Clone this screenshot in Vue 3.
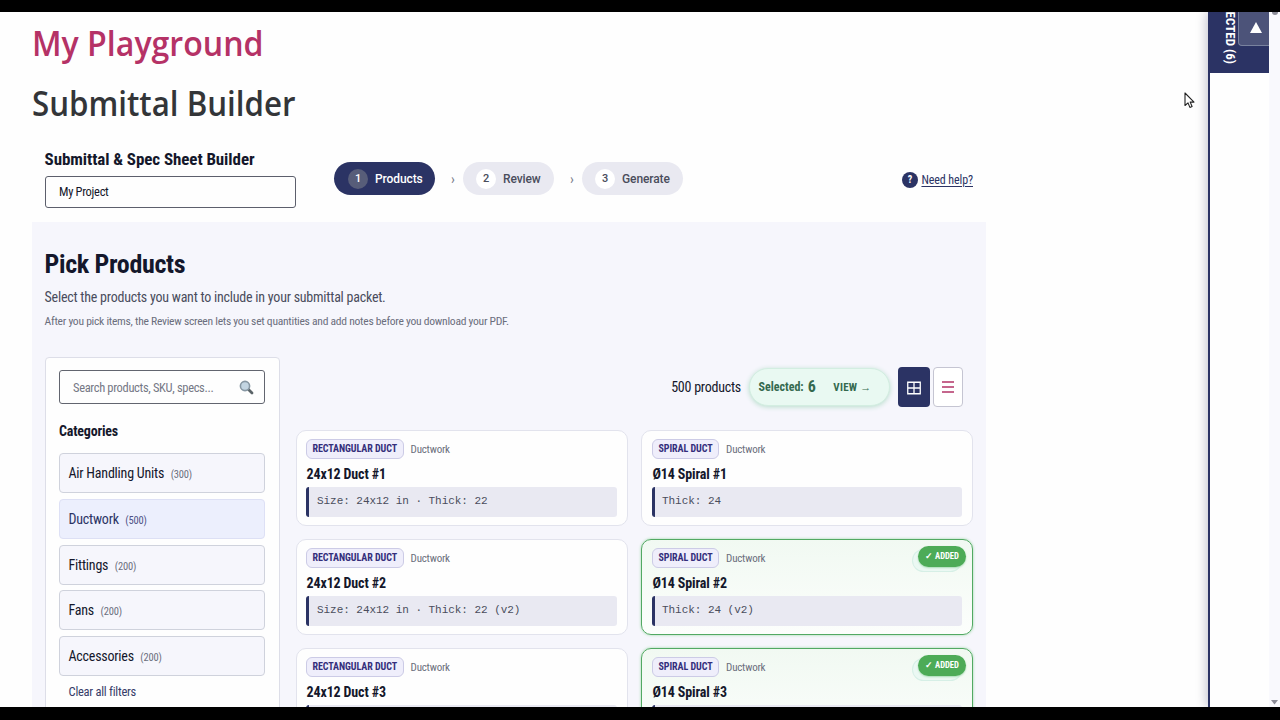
<script setup>
const steps = ['Products', 'Review', 'Generate']
const categories = [
  { name: 'Air Handling Units', count: 300 },
  { name: 'Ductwork', count: 500, active: true },
  { name: 'Fittings', count: 200 },
  { name: 'Fans', count: 200 },
  { name: 'Accessories', count: 200 },
]
const products = [
  { type: 'RECTANGULAR DUCT', name: '24x12 Duct #1', spec: 'Size: 24x12 in · Thick: 22' },
  { type: 'SPIRAL DUCT', name: 'Ø14 Spiral #1', spec: 'Thick: 24' },
  { type: 'RECTANGULAR DUCT', name: '24x12 Duct #2', spec: 'Size: 24x12 in · Thick: 22 (v2)' },
  { type: 'SPIRAL DUCT', name: 'Ø14 Spiral #2', spec: 'Thick: 24 (v2)', added: true },
  { type: 'RECTANGULAR DUCT', name: '24x12 Duct #3', spec: '' },
  { type: 'SPIRAL DUCT', name: 'Ø14 Spiral #3', spec: '', added: true },
]
</script>

<template>
  <div class="screen">
    <div class="viewport">
      <main class="page">
        <h1 class="site">My Playground</h1>
        <h2 class="sub">Submittal Builder</h2>
        <header class="head">
          <div class="project">
            <div class="project-label">Submittal &amp; Spec Sheet Builder</div>
            <div class="project-input">My Project</div>
          </div>
          <nav class="steps">
            <template v-for="(s, i) in steps" :key="s">
              <span v-if="i" class="chev">›</span>
              <div class="step" :class="['s' + i, { on: i === 0 }]">
                <span class="num">{{ i + 1 }}</span><span class="step-name">{{ s }}</span>
              </div>
            </template>
          </nav>
          <div class="help"><span class="q">?</span><span class="help-text">Need help?</span></div>
        </header>

        <section class="panel">
          <h3 class="pick">Pick Products</h3>
          <p class="lead">Select the products you want to include in your submittal packet.</p>
          <p class="hint">After you pick items, the Review screen lets you set quantities and add notes before you download your PDF.</p>
          <div class="cols">
            <aside class="side">
              <div class="search">
                <span class="ph">Search products, SKU, specs...</span>
                <svg width="15" height="15" viewBox="0 0 15 15">
                  <path d="M9 9 L13 13" stroke="#5b6468" stroke-width="2.8" stroke-linecap="round" />
                  <circle cx="6" cy="6" r="4.6" fill="#c3d5e2" stroke="#8797a3" stroke-width="1.6" />
                </svg>
              </div>
              <div class="cat-title">Categories</div>
              <div class="cats">
                <div v-for="c in categories" :key="c.name" class="cat" :class="{ active: c.active }">
                  <span>{{ c.name }}</span><span class="count">({{ c.count }})</span>
                </div>
              </div>
              <div class="clear">Clear all filters</div>
            </aside>
            <div class="main">
              <div class="tools">
                <span class="total">500 products</span>
                <div class="pill">
                  <span class="sel">Selected:</span><span class="six">6</span><span class="view">VIEW →</span>
                </div>
                <div class="tb grid-on">
                  <svg width="14" height="14" viewBox="0 0 14 14"><path d="M.75 1.25h12.5v11.5H.75zM7 1.25v11.5M.75 7h12.5" fill="none" stroke="#fff" stroke-width="1.3" /></svg>
                </div>
                <div class="tb list">
                  <svg width="12" height="12" viewBox="0 0 12 12"><path d="M0 1h12M0 6h12M0 11h12" stroke="#b23468" stroke-width="1.6" /></svg>
                </div>
              </div>
              <div class="cards">
                <article v-for="p in products" :key="p.name" class="card" :class="{ added: p.added }">
                  <div class="meta"><span class="badge">{{ p.type }}</span><span class="kind">Ductwork</span></div>
                  <div class="name">{{ p.name }}</div>
                  <div class="spec">{{ p.spec }}</div>
                  <div v-if="p.added" class="tag">✓ ADDED</div>
                </article>
              </div>
            </div>
          </div>
        </section>
      </main>
      <aside class="drawer">
        <div class="drawer-head">
          <span class="vert">SELECTED (6)</span>
          <div class="toggle"><svg width="12" height="11" viewBox="0 0 12 11"><path d="M6 0 12 11H0z" fill="#fff" /></svg></div>
        </div>
      </aside>
      <div class="scroll">
        <i class="up"></i>
        <svg width="7" height="5" viewBox="0 0 7 5"><path d="M0 0h7L3.5 4.5z" fill="#8c8c98" /></svg>
      </div>
      <svg class="cursor" width="12" height="18" viewBox="0 0 12 18"><path d="M1 1v12.5l3-2.6 1.9 4.5 2.2-.9-1.9-4.4H10z" fill="#fff" stroke="#222" stroke-width="1.1" stroke-linejoin="round" /></svg>
    </div>
  </div>
</template>

<style>
body { margin: 0; background: #000; overflow: hidden; }
</style>

<style scoped>
* { box-sizing: border-box; }
h1, h2, h3, p { margin: 0; }
.screen { width: 1280px; height: 720px; background: #000; padding: 12px 0 13px; overflow: hidden; font-family: "Roboto Condensed", Roboto, "Liberation Sans", sans-serif; font-stretch: 75%; color: #14172b; white-space: nowrap; }
.viewport { position: relative; display: flex; height: 695px; background: #fefefe; overflow: hidden; }
.page { flex: 1; padding-left: 32px; height: 695px; overflow: hidden; }
.site, .sub { width: max-content; font-family: "Open Sans", "Noto Sans", sans-serif; font-stretch: 90%; font-weight: 600; font-size: 34px; line-height: 60px; height: 60px; transform-origin: left; }
.site { color: #b53266; margin-top: 1px; transform: scaleX(.944); }
.sub { color: #333538; transform: scaleX(.919); }
.head { display: flex; width: 954px; height: 89px; padding: 15px 13px 0 12.6px; }
.project { width: 251.4px; }
.project-label { font-size: 17px; letter-spacing: -.08px; font-weight: 700; line-height: 22px; height: 28px; }
.project-input { height: 32px; border: 1px solid #5c5f6c; border-radius: 3px; padding-left: 13.4px; font-size: 12.5px; letter-spacing: -.3px; line-height: 30px; }
.steps { display: flex; align-items: center; margin: 14px 0 0 38px; height: 33px; font-family: Roboto, sans-serif; }
.step { display: flex; align-items: center; height: 33px; border-radius: 17px; background: #e9e9f1; padding-left: 13px; color: #4a4d5c; font-size: 12px; letter-spacing: -.1px; font-weight: 500; font-stretch: 90%; }
.s0 { width: 101px; } .s1 { width: 91px; } .s2 { width: 101px; }
.num { width: 20px; height: 20px; border-radius: 50%; background: #fff; font-size: 11px; line-height: 20px; text-align: center; margin-right: 7px; }
.step.on { background: #2b3364; color: #fff; padding-left: 14px; }
.on .num { background: #575d79; }
.chev { width: 28px; text-align: center; padding-left: 8px; color: #777a88; font-size: 14px; line-height: 20px; }
.help { display: flex; align-items: center; margin: 15px 0 0 auto; height: 33px; font-size: 12px; letter-spacing: -.1px; color: #2b3364; }
.q { width: 16px; height: 16px; border-radius: 50%; background: #2b3364; color: #fff; font-weight: 700; font-size: 10px; line-height: 16px; text-align: center; margin-right: 3.5px; }
.help-text { text-decoration: underline; text-underline-offset: 2px; }
.panel { width: 954px; height: 600px; background: #f6f6fc; padding: 24px 13px 0 12.6px; }
.pick { font-size: 26px; letter-spacing: -.34px; font-weight: 700; line-height: 36px; height: 38px; }
.lead { font-size: 14px; letter-spacing: -.235px; line-height: 26px; height: 26px; color: #4a4d5c; }
.hint { font-size: 11.6px; line-height: 22px; height: 47px; color: #6b6e7c; letter-spacing: -.27px; }
.cols { display: flex; gap: 16.4px; }
.side { flex: none; width: 235px; height: 400px; border: 1px solid #dddee8; border-radius: 4px; background: #fefefe; padding: 12px 14px 0 13.4px; }
.search { display: flex; align-items: center; justify-content: space-between; height: 34px; border: 1px solid #62656f; border-radius: 3px; padding: 0 10px 0 13px; font-size: 12.5px; letter-spacing: -.33px; color: #757885; }
.cat-title { font-size: 14px; letter-spacing: -.18px; font-weight: 700; line-height: 20px; margin: 17px 0 12px; }
.cats { display: flex; flex-direction: column; gap: 5.8px; }
.cat { height: 40px; border: 1px solid #cfd2dc; border-radius: 4px; background: #f6f6fc; padding-left: 8.5px; line-height: 38px; font-size: 14px; letter-spacing: -.22px; }
.cat.active { background: #eceffd; border-color: #dde0f5; color: #2b3364; }
.count { font-size: 10.5px; letter-spacing: -.15px; color: #6b6e7c; margin-left: 6.5px; }
.active .count { color: #4e5286; }
.clear { font-size: 12.5px; letter-spacing: -.26px; line-height: 20px; margin: 6px 0 0 9.6px; color: #363c69; }
.main { width: 677px; }
.tools { display: flex; align-items: center; justify-content: flex-end; height: 40px; margin: 10px 10px 23px 0; }
.total { font-size: 14px; letter-spacing: -.24px; margin-right: 8px; }
.pill { display: flex; align-items: center; width: 141px; height: 38px; border-radius: 19px; background: #e9f9f2; border: 1px solid #d3eee1; box-shadow: 0 1px 5px #b8ddcc; padding-left: 8.5px; color: #35694f; font-size: 12px; font-weight: 700; margin-right: 8px; }
.six { font-size: 16px; margin: 0 17.5px 2px 4px; }
.view { font-size: 11px; letter-spacing: .3px; }
.tb { display: flex; align-items: center; justify-content: center; width: 32px; height: 40px; border-radius: 4px; }
.grid-on { background: #2b3364; margin-right: 3px; padding-top: 2px; }
.list { width: 30px; background: #fff; border: 1px solid #c5c5d2; }
.cards { display: grid; grid-template-columns: 332px 332px; gap: 13px; }
.card { position: relative; height: 96px; border: 1px solid #e2e3ed; border-radius: 10px; background: #fefefe; padding: 8px 10px 0 9px; }
.card:nth-child(even) { padding-left: 10px; }
.card.added { border-color: #52a963; background: linear-gradient(#f1f9f2, #fcfefc); box-shadow: 0 0 3px #9ad7a4; }
.meta { display: flex; align-items: center; height: 20px; }
.badge { height: 20px; border: 1px solid #cccbe6; border-radius: 6px; background: #efeefb; color: #342e7b; font-size: 10px; letter-spacing: -.06px; font-weight: 700; line-height: 18px; padding: 0 5.5px; }
.kind { font-size: 11px; letter-spacing: -.2px; color: #6b6e7c; margin-left: 7px; }
.name { font-size: 14px; letter-spacing: -.14px; font-weight: 700; line-height: 20px; margin-top: 5px; padding-left: .6px; }
.spec { height: 30px; margin-top: 3px; border-left: 3px solid #2b3364; border-radius: 3px; background: #e9e9f2; padding-left: 8px; font-family: "Liberation Mono", monospace; font-size: 11px; letter-spacing: -.04px; line-height: 29px; color: #4a4d5c; }
.card:nth-child(even) .spec { padding-left: 7px; }
.tag { position: absolute; top: 6px; right: 6px; width: 48px; height: 21px; border-radius: 11px; background: #4dab57; color: #fff; font-size: 8.6px; font-weight: 700; line-height: 20px; text-align: center; box-shadow: 0 1px 2px #a6dbb2, -5px 4px 0 0 #ebf8f3, -5px 4px 0 1px #d6efe6; }
.drawer { width: 61px; border-left: 2px solid #2b3364; background: #fefefe; box-shadow: -2px 0 10px #00003038; }
.drawer-head { position: relative; height: 61px; background: #2b3364; overflow: hidden; }
.vert { position: absolute; right: 32px; bottom: 9px; writing-mode: vertical-rl; color: #fff; font-size: 13px; font-weight: 700; line-height: 14px; }
.toggle { position: absolute; right: 0; top: -1px; width: 31px; height: 35px; border: 1px solid #79829e; border-right: 0; border-radius: 0 0 0 4px; background: #4c5379; display: flex; align-items: center; justify-content: center; padding: 0 0 2px 4px; }
.scroll { width: 11px; background: #f9f9fd; display: flex; flex-direction: column; align-items: center; justify-content: space-between; padding-bottom: 2px; }
.up { width: 6px; height: 3px; border-radius: 0 0 3px 3px; background: #8c8c98; }
.cursor { position: absolute; left: 1184px; top: 80px; }
</style>
